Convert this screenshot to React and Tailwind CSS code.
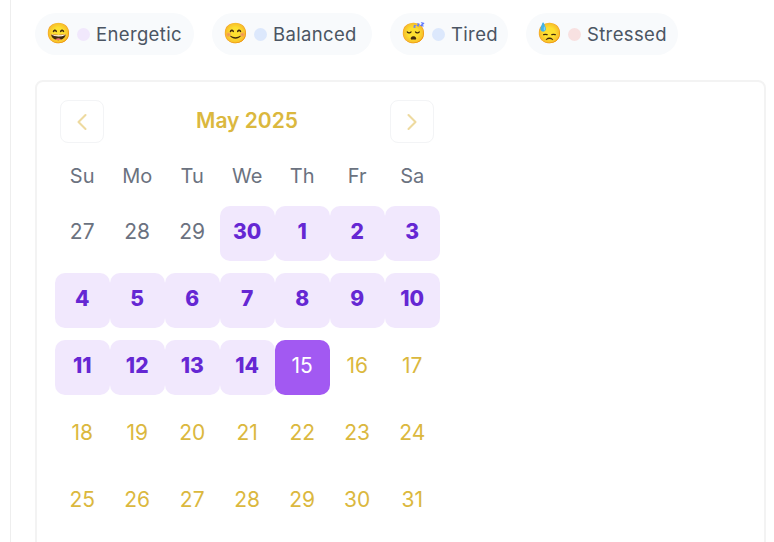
import React from "react";
import { ChevronLeft, ChevronRight } from "lucide-react";

const moods = [
  { emoji: "😄", label: "Energetic", dot: "bg-[#f1e8fc]", width: "w-[159px]" },
  { emoji: "😊", label: "Balanced", dot: "bg-[#dce8fc]", width: "w-[160px]" },
  { emoji: "😴", label: "Tired", dot: "bg-[#dce8fc]", width: "w-[118px]" },
  { emoji: "😓", label: "Stressed", dot: "bg-[#f8e1e1]", width: "w-[152px]" },
];

const days = ["Su", "Mo", "Tu", "We", "Th", "Fr", "Sa"];

const weeks = [
  [[27, "out"], [28, "out"], [29, "out"], [30, "mood"], [1, "mood"], [2, "mood"], [3, "mood"]],
  [[4, "mood"], [5, "mood"], [6, "mood"], [7, "mood"], [8, "mood"], [9, "mood"], [10, "mood"]],
  [[11, "mood"], [12, "mood"], [13, "mood"], [14, "mood"], [15, "today"], [16, "future"], [17, "future"]],
  [[18, "future"], [19, "future"], [20, "future"], [21, "future"], [22, "future"], [23, "future"], [24, "future"]],
  [[25, "future"], [26, "future"], [27, "future"], [28, "future"], [29, "future"], [30, "future"], [31, "future"]],
];

const dayStyles = {
  out: "text-[#6b7280]",
  mood: "bg-[#f1e8fd] text-[#6527d3] font-extrabold rounded-[10px]",
  today: "bg-[#a259f2] text-white rounded-[10px]",
  future: "text-[#dbb83e]",
};

export default function App() {
  return (
    <div className="h-[542px] overflow-hidden bg-white font-['Inter',sans-serif]">
      <div className="ml-[10px] h-full border-l border-[#eeeeee] pl-6 pr-2 pt-[13px]">
        <div className="flex">
          {moods.map((m) => (
            <div key={m.label} className={`mr-[18px] flex h-[42px] items-center rounded-full bg-[#f8fafc] pl-[11px] ${m.width}`}>
              <span className="mb-[2px] text-[20px] leading-none">{m.emoji}</span>
              <span className={`ml-[6px] h-[13px] w-[13px] rounded-full ${m.dot}`} />
              <span className="ml-[6px] mt-[2px] text-[18.5px] tracking-[0.35px] text-[#4b5563]">{m.label}</span>
            </div>
          ))}
        </div>

        <div className="mt-[25px] h-[500px] rounded-lg border-2 border-[#f3f3f3] pl-[18px] pt-[18px]">
          <div className="flex w-[379px] items-center justify-between pl-[5px]">
            <button className="flex h-[43px] w-[44px] items-center justify-center rounded-lg border border-[#f3f4f6] text-[#eeda9f]">
              <ChevronLeft size={28} strokeWidth={1.8} />
            </button>
            <div className="pb-[1px] text-[21px] font-semibold text-[#dbb83e]">May 2025</div>
            <button className="flex h-[43px] w-[44px] items-center justify-center rounded-lg border border-[#f3f4f6] text-[#eeda9f]">
              <ChevronRight size={28} strokeWidth={1.8} />
            </button>
          </div>

          <div className="ml-[-0.3px] mt-[16px] grid w-[385px] grid-cols-7 text-center text-[20px] text-[#6b7280]">
            {days.map((d) => (
              <div key={d} className="h-[34px] leading-[34px]">{d}</div>
            ))}
          </div>

          <div className="ml-[-0.3px] mt-[13px] flex w-[385px] flex-col gap-[12px]">
            {weeks.map((week, i) => (
              <div key={i} className="grid grid-cols-7">
                {week.map(([n, kind], j) => (
                  <div key={j} className={`flex h-[55px] items-center justify-center pb-[3px] text-[21px] ${dayStyles[kind]}`}>
                    {n}
                  </div>
                ))}
              </div>
            ))}
          </div>
        </div>
      </div>
    </div>
  );
}
